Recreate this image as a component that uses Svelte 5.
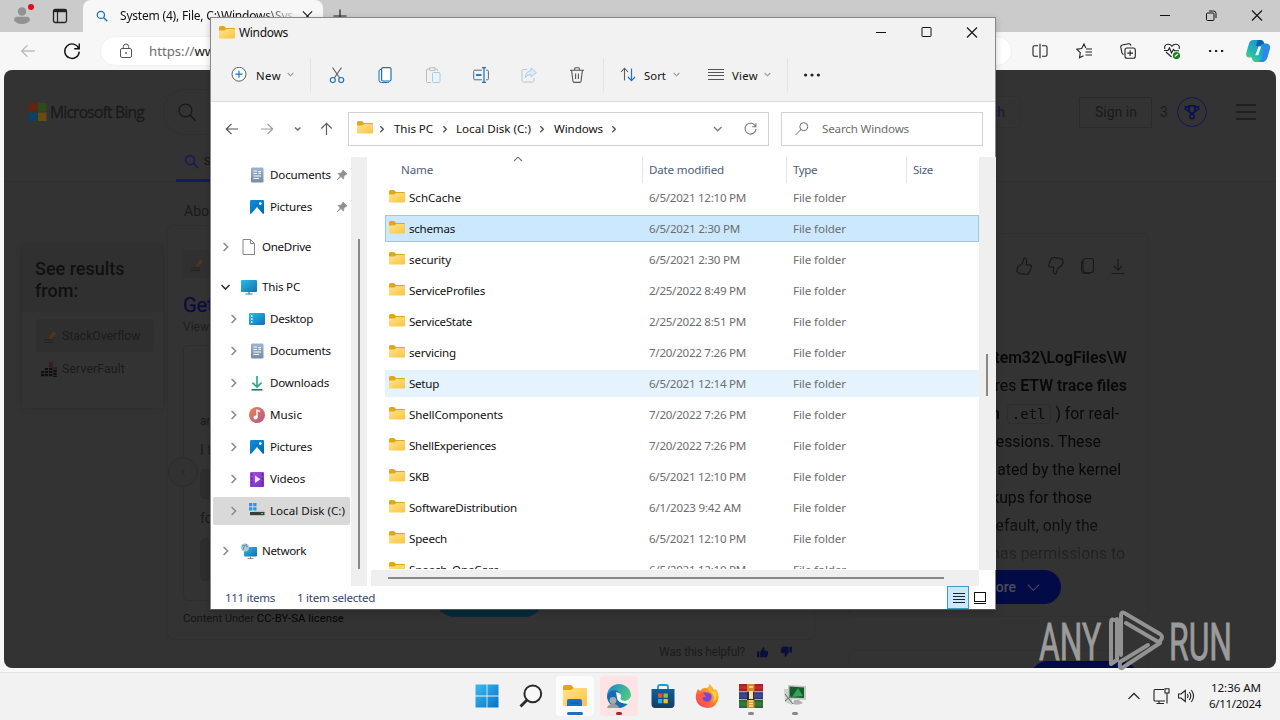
<script>
  // Tightens or opens the tracking of a label so that it fills its width.
  function fit(node, width) {
    if (!width) return;
    const natural = node.getBoundingClientRect().width;
    node.style.letterSpacing = (width - natural) / node.textContent.length + 'px';
  }

  const files = [
    ['SchCache', 52, '6/5/2021 12:10 PM', 97],
    ['schemas', 46, '6/5/2021 2:30 PM', 91, 'selected'],
    ['security', 42, '6/5/2021 2:30 PM', 91],
    ['ServiceProfiles', 76, '2/25/2022 8:49 PM', 97],
    ['ServiceState', 63, '2/25/2022 8:51 PM', 97],
    ['servicing', 47, '7/20/2022 7:26 PM', 97],
    ['Setup', 30, '6/5/2021 12:14 PM', 97, 'hover'],
    ['ShellComponents', 94, '7/20/2022 7:26 PM', 97],
    ['ShellExperiences', 87, '7/20/2022 7:26 PM', 97],
    ['SKB', 20, '6/5/2021 12:10 PM', 97],
    ['SoftwareDistribution', 108, '6/1/2023 9:42 AM', 92],
    ['Speech', 38, '6/5/2021 12:10 PM', 97],
    ['Speech_OneCore', 90, '6/5/2021 12:10 PM', 97]
  ];

  const nav = [
    { label: 'Documents', w: 61, icon: 'doc', kind: 'leaf', pin: true },
    { label: 'Pictures', w: 42, icon: 'pic', kind: 'leaf', pin: true },
    { label: 'OneDrive', w: 49, icon: 'file', kind: 'root', gap: true },
    { label: 'This PC', w: 38, icon: 'pc', kind: 'root', gap: true, open: true },
    { label: 'Desktop', w: 43, icon: 'desktop' },
    { label: 'Documents', w: 61, icon: 'doc' },
    { label: 'Downloads', w: 59, icon: 'down' },
    { label: 'Music', w: 32, icon: 'music' },
    { label: 'Pictures', w: 42, icon: 'pic' },
    { label: 'Videos', w: 35, icon: 'video' },
    { label: 'Local Disk (C:)', w: 75, icon: 'disk', on: true },
    { label: 'Network', w: 44, icon: 'net', kind: 'root', gap: true }
  ];

  const tools = ['cut', 'copy', 'paste', 'rename', 'share', 'trash'];
  const browserTools = ['split', 'star', 'collect', 'heart', 'dots'];
  const tasks = [
    ['start'], ['find'], ['explorer', 'active', 'blue'], ['edge', 'alert', 'red'],
    ['store'], ['firefox'], ['rar', '', 'gray'], ['monitor', '', 'gray']
  ];

  const icons = {
    folder: '<path d="M0 2.5Q0 1 1.5 1H5L7 3H15Q16 3 16 4V8H0Z" fill="#dfa818"/><path d="M0 5.6H5.4L7.4 4H15Q16 4 16 5V12.4Q16 13.4 15 13.4H1Q0 13.4 0 12.4Z" fill="url(#gf)"/>',
    doc: '<rect x="2" y="0.5" width="12.5" height="15" rx="1.2" fill="url(#gd)"/><path d="M4.5 4H8M4.5 6.5H8M4.5 9H12M4.5 11.5H10M9.5 4.5H12M9.5 6.3H12" stroke="#fff" stroke-width="1.2"/>',
    pic: '<rect x="1" y="1" width="14" height="14" rx="1.2" fill="url(#gp)"/><path d="M2 15L8 8L14 15Z" fill="#fff"/><circle cx="11.3" cy="4.6" r="1.4" fill="#fff"/>',
    file: '<path d="M2 .5H9.5L13.5 4.5V15.5H2ZM9.5 .5V4.5H13.5" fill="#fff" stroke="#858585"/>',
    pc: '<rect x="0" y="1" width="16" height="12" rx="1" fill="url(#gc)"/><path d="M8 13V15M4.5 15H11.5" stroke="#2f83a8" stroke-width="1.2"/>',
    desktop: '<rect x="0" y="2" width="16" height="12" rx="1.4" fill="url(#gc)"/><path d="M2 5H3.5M2 8H3.5M2 11H3.5" stroke="#fff" stroke-width="1.5"/>',
    down: '<path d="M8 1V12M3.4 7.6L8 12L12.6 7.6" stroke="#27b083" stroke-width="1.7" fill="none"/><path d="M2.5 14.8H13.5" stroke="#128764" stroke-width="1.6"/>',
    music: '<circle cx="8" cy="8" r="8" fill="url(#gm)"/><circle cx="6.5" cy="10.5" r="2" fill="#fff"/><path d="M8 10.5V3.2L11 4.5" stroke="#fff" stroke-width="1.4" fill="none"/>',
    video: '<rect x="1" y="1" width="14" height="15" rx="1" fill="url(#gv)"/><path d="M6 4.5L11.5 8.2L6 12Z" fill="#f2e6ff"/><path d="M2.8 2.5V15M13.4 2.5V15" stroke="#5c249c" stroke-width="1.5" stroke-dasharray="2 2"/>',
    disk: '<path d="M0 0H3.3V3.3H0ZM4.2 0H7.5V3.3H4.2ZM0 4.2H3.3V7.5H0ZM4.2 4.2H7.5V7.5H4.2Z" fill="#1aa0e0"/><path d="M3 8.5L15.5 7.5V9.5H1Z" fill="#c4c4c4"/><rect x="1" y="9" width="14.5" height="3.2" fill="#3c3c3c"/><path d="M12 10.6H14" stroke="#6bd36b"/>',
    net: '<rect x="3" y="4" width="13" height="9.5" rx="1" fill="url(#gc)"/><path d="M9.5 13.5V16M6.5 15.7H12.5" stroke="#888"/><circle cx="4" cy="4.5" r="4" fill="#a8cede"/><path d="M1 3Q4 1 7 4M2 7Q2 3 6 1" stroke="#5c8fa8" fill="none"/>',
    pin: '<path d="M7 1L11 5L9.5 5.6L7.8 7.5L7.5 10L5 7.6L1 11L4.3 7L2 4.5L4.5 4.2L6.4 2.5Z" fill="#909090" stroke="#909090" stroke-width=".8"/>',
    right: '<path d="M3.6 2L7.6 6L3.6 10" fill="none" stroke="#898989" stroke-width="1.5"/>',
    crumb: '<path d="M4.3 3.2L7.3 6.2L4.3 9.2" fill="none" stroke="#555" stroke-width="1.4"/>',
    openv: '<path d="M1.5 4L5.5 8L9.5 4" fill="none" stroke="#333" stroke-width="1.6"/>',
    chev: '<path d="M2.7 4L5.5 6.8L8.3 4" fill="none" stroke="#999" stroke-width="1.1"/>',
    up: '<path d="M2 8L6 4L10 8" fill="none" stroke="#777" stroke-width="1.1"/>',
    chevd: '<path d="M3 4L6.7 7.8L10.5 4" fill="none" stroke="#7a7a7a" stroke-width="1.3"/>',
    chevs: '<path d="M3 4.5L5.7 7L8.4 4.5" fill="none" stroke="#6a6a6a" stroke-width="1.5"/>',
    plus: '<circle cx="8" cy="7.2" r="7" fill="#fafdff" stroke="#5d6268"/><path d="M8 3.7V10.7M4.5 7.2H11.5" stroke="#1678c8" stroke-width="1.2"/>',
    cut: '<path d="M3.5 .5L10.7 11M12.5 .5L5.3 11" stroke="#5c5c5c" stroke-width="1.1"/><circle cx="3.8" cy="13" r="2.5" fill="none" stroke="#1b72bd" stroke-width="1.2"/><circle cx="12.2" cy="13" r="2.5" fill="none" stroke="#1b72bd" stroke-width="1.2"/>',
    copy: '<rect x="4.6" y=".6" width="9.4" height="13.4" rx="1.5" fill="#fff" stroke="#1971bb" stroke-width="1.2"/><path d="M4 2.3Q2 2.5 2 4V13.3Q2 15.5 4.3 15.5H10.5Q12 15.5 12.4 14.5" fill="none" stroke="#1971bb"/>',
    paste: '<path d="M6 15.5H2.5Q1.5 15.5 1.5 14.5V3Q1.5 2 2.5 2H4.5M10 2H11.5Q12.5 2 12.5 3V4M4.5 .7H10V3.3H4.5Z" fill="none" stroke="#bdbdbd"/><rect x="7.5" y="5.5" width="7.5" height="10" rx="1" fill="#e8f4fc" stroke="#a6cceb"/>',
    rename: '<path d="M9 3.2H1.8Q.7 3.2 .7 4.3V11.7Q.7 12.8 1.8 12.8H9M13 3.2H14.4Q15.4 3.2 15.4 4.3V11.7Q15.4 12.8 14.4 12.8H13" fill="none" stroke="#5e6770"/><path d="M11 .7V15.3M9 .6H13M9 15.4H13" stroke="#1971bb" stroke-width="1.2"/><path d="M3 8H8.5" stroke="#1683d8" stroke-width="2"/>',
    share: '<path d="M6 2.5H2.5Q1 2.5 1 4V13.5Q1 15 2.5 15H11.5Q13 15 13 13.5V11" fill="none" stroke="#c2c2c2"/><path d="M10 1L15.3 5.7L10 10V7.6Q6 7.2 4.4 10.7Q4.4 4.3 10 3.7Z" fill="#dceefa" stroke="#a9cce9"/>',
    trash: '<path d="M1 3.2H15M5.7 3V1.5Q5.7 .7 6.5 .7H9.5Q10.3 .7 10.3 1.5V3M2.6 3.5L4 14.2Q4.1 15.4 5.3 15.4H10.7Q11.9 15.4 12 14.2L13.4 3.5M6.6 6.5V12M9.4 6.5V12" fill="none" stroke="#555" stroke-width="1.1"/>',
    sort: '<path d="M4.5 13.5V1.5M1 5L4.5 1.2L8 5" fill="none" stroke="#5d5d5d" stroke-width="1.1"/><path d="M11.5 1.5V13.5M8 10L11.5 13.7L15 10" fill="none" stroke="#1977c9" stroke-width="1.2"/>',
    lines: '<path d="M0 2.5H16M0 5.5H16M0 8.5H16M0 12.5H16" stroke="#555"/>',
    more: '<path d="M0 8a1.6 1.6 0 1 0 3.2 0a1.6 1.6 0 1 0-3.2 0M6.4 8a1.6 1.6 0 1 0 3.2 0a1.6 1.6 0 1 0-3.2 0M12.8 8a1.6 1.6 0 1 0 3.2 0a1.6 1.6 0 1 0-3.2 0" fill="#252525"/>',
    back: '<path d="M14 8H2.5M7.5 2.8L2.3 8L7.5 13.2" fill="none" stroke="#505050" stroke-width="1.2"/>',
    fwd: '<path d="M2 8H13.5M8.5 2.8L13.7 8L8.5 13.2" fill="none" stroke="#9b9b9b" stroke-width="1.2"/>',
    upar: '<path d="M8.5 14V2.5M3.3 7.5L8.5 2.3L13.7 7.5" fill="none" stroke="#606060" stroke-width="1.2"/>',
    reload: '<path d="M13.4 6A5.8 5.8 0 1 0 13.8 8.5M13.8 2V6.2H9.8" fill="none" stroke="currentColor" stroke-width="1.1"/>',
    glass: '<circle cx="9.8" cy="5.7" r="4" fill="none" stroke="#6e6e6e"/><path d="M7 8.5L1.5 14" stroke="#6e6e6e"/>',
    min: '<path d="M3 7.5H13" stroke="#111"/>',
    max: '<rect x="3" y="2.5" width="9" height="9" rx=".6" fill="none" stroke="#111"/>',
    close: '<path d="M3 2.5L13 12.5M13 2.5L3 12.5" stroke="#111" stroke-width="1.1"/>',
    restore: '<rect x="3.5" y="5" width="7.5" height="7.5" rx="1" fill="none" stroke="#111"/><path d="M6 3H10.5Q13 3 13 5.5V10" fill="none" stroke="#111"/>',
    tabs: '<rect x="1.5" y="1.5" width="13" height="13" rx="1.8" fill="none" stroke="#222" stroke-width="1.3"/><path d="M1.5 3H14.5" stroke="#222" stroke-width="2.4"/><path d="M5.5 4V14" stroke="#222" stroke-width="1.2"/>',
    user: '<circle cx="8" cy="4.5" r="4.2" fill="#929292"/><path d="M0 13.5Q0 9.8 3 9.8H13Q16 9.8 16 13.5Q13 17 8 17Q3 17 0 13.5Z" fill="#929292"/>',
    search: '<circle cx="6.5" cy="6.5" r="4.8" fill="none" stroke="currentColor" stroke-width="1.7"/><path d="M10 10L15 15" stroke="currentColor" stroke-width="1.9"/>',
    search2: '<circle cx="6.6" cy="6.6" r="5.7" fill="none" stroke="currentColor" stroke-width="1.1"/><path d="M10.8 10.8L15.5 15.5" stroke="currentColor" stroke-width="1.2"/>',
    plus2: '<path d="M8 1.5V14.5M1.5 8H14.5" stroke="#222" stroke-width="1.2"/>',
    lock: '<rect x="2.5" y="5.5" width="11" height="9" rx="1.5" fill="none" stroke="#555"/><path d="M5.3 5.5V3.6Q5.3 1 8 1Q10.7 1 10.7 3.6V5.5" fill="none" stroke="#555"/><circle cx="8" cy="10" r=".9" fill="#555"/>',
    split: '<path d="M6 2.7H2.5Q1 2.7 1 4.2V11.8Q1 13.3 2.5 13.3H6M10 2.7H13.5Q15 2.7 15 4.2V11.8Q15 13.3 13.5 13.3H10M8 .8V15.2" fill="none" stroke="#222" stroke-width="1.1"/>',
    star: '<path d="M9.8 5.1L8 1L5.7 5.5L.8 6.2L4.3 9.7L3.5 14.8L7.5 12.8M10 6H16M9.5 9H16M9.5 12H16" fill="none" stroke="#222" stroke-width="1.1"/>',
    collect: '<rect x="5" y="5" width="10.3" height="10.3" rx="2" fill="none" stroke="#222" stroke-width="1.1"/><path d="M10.1 7.3V13M7.3 10.1H13M3.7 11.5Q2.2 11 1.9 9.6L.8 4.4Q.5 2.5 2.3 2L8.5 .8Q10.5 .5 11 2.7" fill="none" stroke="#222" stroke-width="1.1"/>',
    heart: '<path d="M.8 6Q0 1.5 4 1.2Q6.5 1 8 3.3Q9.5 1 12 1.2Q16 1.5 15.2 6M2 9L7.5 14M0 7.5H4L5.5 4.8L7.5 10L9.5 6.5L10.5 7.7H15" fill="none" stroke="#222" stroke-width="1.1"/><circle cx="12.5" cy="12.5" r="3.6" fill="#178417"/><path d="M10.8 13.5L14 11" stroke="#fff" stroke-width="1.1"/>',
    dots: '<path d="M1 8h2.2M7 8h2.2M13 8h2.2" stroke="#222" stroke-width="2.1"/>',
    copilot: '<path d="M7 0H14.5Q17.4 0 18.2 3.6H20Q24.6 3.6 23.8 8.5L21.4 17.2Q20 22 16 22H9.5Q6.4 22 5.6 17.6H3.6Q-.6 17.6 .2 13L3 3.6Q4.2 0 7 0Z" fill="url(#gcp)"/><path d="M11 22Q14.6 22 16 17.6L18.6 8.2Q19.6 4 22 4.4Q24.4 5.4 23.8 8.5L21.4 17.2Q20 22 16 22Z" fill="#2f86ef"/><path d="M12 0H14.5Q17.4 0 18.2 3.6Q15.6 3.6 14.6 6L10 6Q10.6 1.6 12 0Z" fill="#125fae"/><path d="M12.6 6.4H15.3L12.2 15.2H9.2Z" fill="#fff"/>',
    start: '<path d="M.5 .5H11.6V11.6H.5ZM12.4 .5H23.5V11.6H12.4ZM.5 12.4H11.6V23.5H.5ZM12.4 12.4H23.5V23.5H12.4Z" fill="url(#gs)"/>',
    find: '<circle cx="13.8" cy="9.8" r="8.4" fill="#f8f8f8" stroke="#2b2b2b" stroke-width="2"/><path d="M8 16L1.5 22.5" stroke="#2b2b2b" stroke-width="2.8"/>',
    explorer: '<path d="M0 3Q0 1 2 1H8L11 4H23V12H0Z" fill="#e5a50f"/><path d="M0 6H8L11 4H23Q24 4 24 5V21Q24 22 23 22H1Q0 22 0 21Z" fill="url(#gf)"/><path d="M4 22V17Q4 15 6 15H17Q19 15 19 17V22Z" fill="#1474ca"/><path d="M7 19H16" stroke="#0c5eac" stroke-width="1.2"/>',
    edge: '<circle cx="12" cy="12" r="12" fill="url(#ge)"/><path d="M0 13Q2 5 9 6.5Q14 8 14 12Q10 14 12 17Q14 20 21 19Q17 24 11 24Q2 22 0 13Z" fill="#176bb4"/><path d="M9 8Q15 9 14 13Q12 16 18 17Q23 16 23.8 12L24 15L21 20Q10 19 10 14Z" fill="#f4fbff"/><circle cx="6" cy="16.5" r="3.4" fill="#aaa"/><path d="M0 24Q1 20 6 20Q11 20 12 24Z" fill="#9c9c9c"/>',
    store: '<path d="M7 5V3Q7 1 9 1H15Q17 1 17 3V5" fill="none" stroke="#16a0df" stroke-width="1.8"/><path d="M.5 5H23.5V20Q23.5 24 20 24H4Q.5 24 .5 20Z" fill="url(#gst)"/><path d="M7 9.5H11.3V13.8H7Z" fill="#f25022"/><path d="M12.5 9.5H16.8V13.8H12.5Z" fill="#8bc53f"/><path d="M7 15H11.3V19.3H7Z" fill="#20b0f0"/><path d="M12.5 15H16.8V19.3H12.5Z" fill="#ffbd13"/>',
    firefox: '<path d="M3 5L5 7Q8 3 12 4Q14 3 14.5 0Q18 3 19 6L20.5 5Q24 9 23.5 14Q22 24 12 24Q2 23 .7 14Q.5 9 3 5Z" fill="url(#gff)"/><path d="M7 9Q12 7 16 10Q18 15 14 17.5Q8 18.5 6.5 13Q9 13.5 11 12.2Q7 11.5 7 9Z" fill="#7546da"/><path d="M2 11Q4 8 8 9L11 12Q7 12.5 7.5 15Q10 20 17 17Q12 22 6 19Q2 16 2 11Z" fill="#ff5b43"/><path d="M16 8Q21 12 18 18Q23 15 21 8Q17 8 14 4Q13 6 16 8Z" fill="#ffd43a"/>',
    rar: '<rect x="0" y="0" width="24" height="7.5" fill="#bf292f"/><rect x="0" y="8.2" width="24" height="7.2" fill="#34479f"/><rect x="0" y="16" width="24" height="8" fill="#33783a"/><path d="M0 1H24M0 9H24M0 17H24M0 6H24M0 14.5H24M0 23H24" stroke="#1d1b28" stroke-width=".8" opacity=".5"/><rect x="8" y="0" width="7.5" height="24" fill="#d68a28"/><path d="M8 8H15.5V16H8Z" fill="#392722"/><rect x="10" y="7" width="4" height="8" fill="#eee2c0"/><path d="M10 3H14M10 17H14M10 19.5H14M10 22H14" stroke="#ffe49a" stroke-width="1.3"/>',
    monitor: '<path d="M1 5H9V21L2 18Z" fill="#cdd1ce"/><path d="M5 1L23 2V16L5 15Z" fill="#c3c8c4"/><path d="M6.5 2.5L21 3.5V14L6.5 13.5Z" fill="#175c2d"/><path d="M9 13L15 4L20 12Z" fill="#35a159"/><path d="M11 16H16L20 19Q15 22 10 20Z" fill="#aeb3b0"/><path d="M2 10L10 20M2 17L8 12" stroke="#656a68"/>',
    tup: '<path d="M1.3 8.5L6 3.8L10.7 8.5" fill="none" stroke="#222" stroke-width="1.1"/>',
    net2: '<path d="M11 1.5H2Q1 1.5 1 2.5V12Q1 13 2 13H12M6 13V15.5M3.5 15.5H11M14 6V15.5M12 .7H16V5H12ZM14 5V7" fill="none" stroke="#222" stroke-width="1.1"/>',
    sound: '<path d="M.5 6H3L7.3 2.5V13.5L3 10H.5ZM9.3 6Q10.8 8 9.3 10M11.3 4Q14.3 8 11.3 12M13.3 2Q17.8 8 13.3 14" fill="none" stroke="#222" stroke-width="1.1"/>',
    thumb: '<path d="M2 10Q1 14 4 14.5L9 15.5Q12 16 13 13L14.5 9Q15 7 13 7H10Q11 1 8.5 1Q7.5 1 7.5 3Q7 6 4.5 7.5Q2.5 8 2 10Z" fill="none" stroke="currentColor" stroke-width="1.1"/>',
    thumbf: '<path d="M0 7H3V14H0ZM4 7.5L8 1Q10 2 9 6H13Q15 8 12.5 14H4Z" fill="currentColor"/>',
    cup: '<path d="M5 1.8H11V5.8Q11 9.3 8 9.3Q5 9.3 5 5.8ZM5 2.8H1.5V5.3L5 7.3M11 2.8H14.5V5.3L11 7.3" fill="none" stroke="currentColor" stroke-width="1.8"/><circle cx="8" cy="12.5" r="2.2" fill="none" stroke="currentColor" stroke-width="1.6"/>',
    sheet: '<rect x="4" y="1" width="10.5" height="14" rx="2.5" fill="none" stroke="currentColor" stroke-width="1.2"/><path d="M4 3.5Q2.5 3.5 2.5 5V12.5Q2.5 16 6 16H11" fill="none" stroke="currentColor" stroke-width="1.1"/>',
    dl: '<path d="M8 1V12M3.8 8L8 12.2L12.2 8M1.5 15.5H14.5" fill="none" stroke="currentColor" stroke-width="1.2"/>',
    bigchev: '<path d="M1 4.5L8 11.5L15 4.5" fill="none" stroke="currentColor" stroke-width="1.3"/>',
    burger: '<path d="M0 1H20M0 8H20M0 15H20" stroke="#1a1a1a" stroke-width="1.4"/>',
    so: '<path d="M7 10L11 3L14 6L9 11Z" fill="#55331d"/><path d="M2 12H11M2 14.5H11" stroke="#222" stroke-width="1.2"/>',
    sf: '<path d="M1.5 10V16M5.5 7V16M9.7 1V16M14 6V16" stroke="#101010" stroke-width="3.4" stroke-dasharray="2.3 .7"/><path d="M9.7 1V7M14 6V9" stroke="#421920" stroke-width="3.4" stroke-dasharray="2.3 .7"/>',
    logo: '<path d="M0 0H8.5V8.5H0Z" fill="#66220f"/><path d="M9.5 0H18V8.5H9.5Z" fill="#30491b"/><path d="M0 9.5H8.5V18H0Z" fill="#0c4160"/><path d="M9.5 9.5H18V18H9.5Z" fill="#684b10"/>',
    preview: '<rect x="1.5" y="1.5" width="11" height="9" fill="#fff" stroke="#111"/><path d="M1 12.5H13" stroke="#111"/>',
    details: '<path d="M2 2.5H14M2 5.5H14M2 8.5H14M2 11.5H14" stroke="#222"/>'
  };

  const answer = [
    { html: '<b>tem32\\LogFiles\\W</b>', right: 0 },
    { html: 'res <b>ETW trace files</b>', right: 0 },
    { html: '<b>n</b> <code>.etl</code> ) for real-', right: 8 },
    { html: 'essions. These', right: 26 },
    { html: 'ated by the kernel', right: 6 },
    { html: 'kups for those', right: 35 },
    { html: 'efault, only the', right: 29 },
    { html: 'has permissions to', right: 2 }
  ];
</script>

{#snippet ic(name, w = 16, h = w, vb = `0 0 ${w} ${h}`)}
  <svg class="ic" width={w} height={h} viewBox={vb}>{@html icons[name]}</svg>
{/snippet}
{#snippet t(text, w)}<span class="t" use:fit={w}>{text}</span>{/snippet}

<svg class="defs" width="0" height="0">
  <defs>
    <linearGradient id="gf" x1="0" y1="0" x2="1" y2="1"><stop offset="0" stop-color="#ffe391" /><stop offset="1" stop-color="#fcc53d" /></linearGradient>
    <linearGradient id="gd" x1="0" y1="0" x2="0" y2="1"><stop offset="0" stop-color="#9db3d0" /><stop offset="1" stop-color="#748cab" /></linearGradient>
    <linearGradient id="gp" x1="0" y1="0" x2="1" y2="1"><stop offset="0" stop-color="#0b8fdc" /><stop offset="1" stop-color="#0564b2" /></linearGradient>
    <linearGradient id="gc" x1="0" y1="0" x2="1" y2="1"><stop offset="0" stop-color="#29c0de" /><stop offset="1" stop-color="#126db8" /></linearGradient>
    <linearGradient id="gm" x1="0" y1="0" x2="1" y2="1"><stop offset="0" stop-color="#f08457" /><stop offset="1" stop-color="#b15589" /></linearGradient>
    <linearGradient id="gv" x1="0" y1="0" x2="1" y2="1"><stop offset="0" stop-color="#a652e4" /><stop offset="1" stop-color="#7531bf" /></linearGradient>
    <linearGradient id="gs" x1="0" y1="0" x2="1" y2="1"><stop offset="0" stop-color="#3cbcf0" /><stop offset="1" stop-color="#0571c9" /></linearGradient>
    <linearGradient id="ge" x1="0" y1="0" x2="1" y2=".6"><stop offset="0" stop-color="#1588d4" /><stop offset="1" stop-color="#59cf79" /></linearGradient>
    <linearGradient id="gst" x1="0" y1="0" x2="0" y2="1"><stop offset="0" stop-color="#0f5e9e" /><stop offset="1" stop-color="#173a66" /></linearGradient>
    <linearGradient id="gff" x1="1" y1="0" x2="0" y2="1"><stop offset="0" stop-color="#ffdf36" /><stop offset=".5" stop-color="#ff8230" /><stop offset="1" stop-color="#f12a72" /></linearGradient>
    <linearGradient id="gcp" x1="0" y1=".9" x2=".7" y2=".1"><stop offset="0" stop-color="#5fd07a" /><stop offset=".45" stop-color="#1fb5b5" /><stop offset="1" stop-color="#1a8fe0" /></linearGradient>
  </defs>
</svg>

<div class="screen">
  <div class="tabbar">
    <div class="profile">{@render ic('user', 16, 18)}<i></i></div>
    <div class="tabact">{@render ic('tabs')}</div>
    <div class="tab">
      <span class="bingico">{@render ic('search', 12, 12, '0 0 16 16')}</span>
      <span class="title">{@render t('System (4), File, C:\\Windows\\Sys', 173)}</span>
      {@render ic('close', 13, 13, '1 1 14 14')}
    </div>
    <div class="newtab">{@render ic('plus2')}</div>
    <div class="wc">
      {@render ic('min')}{@render ic('restore')}{@render ic('close')}
    </div>
  </div>

  <div class="browserbar">
    <span class="bback">{@render ic('back', 18, 18, '0 0 16 16')}</span>
    <span class="breload">{@render ic('reload', 20, 20, '0 0 16 16')}</span>
    <div class="url">{@render ic('lock')}<span class="addr"><em>https://</em>www.bing</span></div>
    <div class="btools">{#each browserTools as b}{@render ic(b)}{/each}</div>
    {@render ic('copilot', 24, 22)}
  </div>

  <div class="page">
    <header>
      <div class="brand">
        {@render ic('logo', 19, 18, '0 0 18 18')}
        <span class="bing">{@render t('Microsoft Bing', 94)}</span>
        <div class="pill">{@render ic('search2', 18, 18, '0 0 16 16')}</div>
        <div class="deep">ch</div>
        <div class="signin">{@render t('Sign in', 42)}</div>
        <span class="pts">3</span>
        <span class="badge">{@render ic('cup')}</span>
        {@render ic('burger', 20, 16)}
      </div>
      <div class="scope"><div>{@render ic('search', 15, 15, '0 0 16 16')}<span>S</span></div></div>
    </header>
    <div class="cols">
      <aside>
        <h3>See results from:</h3>
        <div class="srcs">
          <div class="src on">{@render ic('so')}{@render t('StackOverflow', 78)}</div>
          <div class="src">{@render ic('sf', 17, 16)}{@render t('ServerFault', 63)}</div>
        </div>
      </aside>
      <section class="mainc">
        <div class="about">Abou</div>
        <div class="card">
          <div class="fav">{@render ic('so')}</div>
          <h2>Get</h2>
          <div class="viewed">View</div>
          <div class="inner">
            <p class="dim">an</p>
            <p>I f</p>
            <div class="codebox"></div>
            <p>fo</p>
            <div class="codebox tall"></div>
            <div class="teal"></div>
          </div>
          <div class="lic">{@render t('Content Under', 71)} <b>{@render t('CC-BY-SA license', 87)}</b></div>
          <span class="arrow">‹</span>
        </div>
        <div class="helpful">{@render t('Was this helpful?', 86)}{@render ic('thumbf', 12, 12, '0 0 15 15')}<span class="flip">{@render ic('thumbf', 12, 12, '0 0 15 15')}</span></div>
      </section>
      <section class="rightc">
        <div class="acard">
          <div class="acts">{@render ic('thumb', 18, 18, '0 0 16 16')}<span class="flip">{@render ic('thumb', 18, 18, '0 0 16 16')}</span>{@render ic('sheet', 17, 18, '0 0 17 17')}{@render ic('dl', 17, 17, '0 0 17 17')}</div>
          <div class="lines">
            {#each answer as a}<div class="line" style:padding-right="{a.right}px">{@html a.html}</div>{/each}
          </div>
          <div class="readmore">more {@render ic('bigchev', 13, 13, '0 0 16 16')}</div>
        </div>
        <div class="next"><div></div></div>
      </section>
    </div>
  </div>

  <div class="taskbar">
    <div class="tasks">
      {#each tasks as [name, state, mark]}
        <div class="task {state || ''}">{@render ic(name, 24)}<i class={mark || 'none'}></i></div>
      {/each}
    </div>
    <div class="tray">
      {@render ic('tup', 14, 14, '0 0 12 12')}{@render ic('net2', 17, 17, '0 0 17 17')}{@render ic('sound', 17, 17, '0 0 17 17')}
      <div class="clock">{@render t('12:36 AM', 50)}{@render t('6/11/2024', 52)}</div>
    </div>
  </div>

  <svg class="mark" width="200" height="70" viewBox="0 0 200 70">
    <g fill="#9b9b9b" stroke="#9b9b9b" stroke-width=".9" font-family="Roboto, sans-serif" font-size="52">
      <text x="1" y="50.5" textLength="62" lengthAdjust="spacingAndGlyphs">ANY</text>
      <text x="131" y="50.5" textLength="63" lengthAdjust="spacingAndGlyphs">RUN</text>
    </g>
    <g fill="none" stroke="#929292" stroke-width="4" stroke-linejoin="round" stroke-linecap="round">
      <path d="M76 11Q73 9 73 14V55L79 51V10M83 46V7Q83 1 88 5L122 25Q126 28 122 32M88 14L122 34L84 59Q81 60 82 53L110 36" />
    </g>
  </svg>

  <div class="window">
    <div class="top">
      <div class="titlebar">{@render ic('folder')}{@render t('Windows', 49)}
        <div class="wctl">{@render ic('min')}{@render ic('max')}{@render ic('close')}</div>
      </div>
      <div class="commands">
        <div class="cmd new">{@render ic('plus')}{@render t('New', 25)}{@render ic('chev', 12)}</div>
        <div class="group">{#each tools as n}<div class="tool">{@render ic(n)}</div>{/each}</div>
        <div class="cmd sort">{@render ic('sort')}{@render t('Sort', 22)}{@render ic('chev', 12)}</div>
        <div class="cmd view">{@render ic('lines')}{@render t('View', 26)}{@render ic('chev', 12)}</div>
        <div class="cmd last">{@render ic('more')}</div>
      </div>
    </div>
    <div class="addressrow">
      <div class="navbtns">{@render ic('back')}{@render ic('fwd')}{@render ic('chevs', 12)}{@render ic('upar')}</div>
      <div class="path">
        {@render ic('folder')}{@render ic('crumb', 12)}
        <span class="c1">{@render t('This PC', 39)}</span>{@render ic('crumb', 12)}
        <span class="c2">{@render t('Local Disk (C:)', 75)}</span>{@render ic('crumb', 12)}
        <span class="c3">{@render t('Windows', 49)}</span>{@render ic('crumb', 12)}
        <span class="drop">{@render ic('chevd', 12)}</span>
        <span class="refresh">{@render ic('reload', 15, 15, '0 0 16 16')}</span>
      </div>
      <div class="searchbox">{@render ic('glass')}{@render t('Search Windows', 87)}</div>
    </div>
    <div class="body">
      <nav>
        {#each nav as n}
          <div class="nrow {n.kind || 'child'}" class:gap={n.gap} class:on={n.on}>
            <span class="exp">{#if n.kind !== 'leaf'}{@render ic(n.open ? 'openv' : 'right', 12)}{/if}</span>
            {@render ic(n.icon)}
            {@render t(n.label, n.w)}
            {#if n.pin}<span class="pin">{@render ic('pin', 12)}</span>{/if}
          </div>
        {/each}
      </nav>
      <div class="navscroll"><i></i></div>
      <div class="files">
        <div class="view-area">
          <div class="listing">
            <div class="heads">
              <div class="h name">{@render t('Name', 32)}<span class="sorted">{@render ic('up', 12)}</span></div>
              <div class="h date">{@render t('Date modified', 75)}</div>
              <div class="h type">{@render t('Type', 24)}</div>
              <div class="h size">{@render t('Size', 20)}</div>
            </div>
            {#each files as [name, w, date, dw, state]}
              <div class="frow {state || ''}">
                <div class="fname">{@render ic('folder')}{@render t(name, w)}</div>
                <div class="fdate">{@render t(date, dw)}</div>
                <div class="ftype">{@render t('File folder', 53)}</div>
              </div>
            {/each}
          </div>
          <div class="vscroll"><i></i></div>
        </div>
        <div class="hscroll"><i></i></div>
      </div>
    </div>
    <div class="status">
      {@render t('111 items', 50)}<span class="sel">{@render t('1 item selected', 78)}</span>
      <div class="modes"><span class="m on">{@render ic('details', 14)}</span><span class="m">{@render ic('preview', 14)}</span></div>
    </div>
  </div>
</div>

<style>
  :global(body) { margin: 0; overflow: hidden; }
  * { box-sizing: border-box; }
  .defs { position: absolute; }
  .ic { display: block; flex: none; }
  .t { white-space: nowrap; flex: none; }
  .screen { position: relative; width: 1280px; height: 720px; overflow: hidden; display: flex; flex-direction: column; background: #f7f7f7; font: 11.6px/16px "Noto Sans", sans-serif; color: #111; }

  .tabbar { height: 32px; background: #cbcbcb; display: flex; align-items: center; flex: none; }
  .profile { width: 44px; padding-left: 14px; position: relative; }
  .profile i { position: absolute; left: 28px; top: -3px; width: 6px; height: 6px; border-radius: 50%; background: #e00b1c; }
  .tabact { width: 39px; padding-left: 8px; }
  .tab { width: 240px; height: 32px; background: #f7f7f7; border-radius: 8px 8px 0 0; display: flex; align-items: center; padding-left: 13px; }
  .bingico { color: #1a6fc0; width: 24px; }
  .title { width: 181px; mask-image: linear-gradient(90deg, #000 140px, transparent 180px); font-size: 12px; }
  .newtab { padding-left: 9px; }
  .wc { margin-left: auto; display: flex; gap: 30px; padding-right: 15px; }

  .browserbar { height: 38px; flex: none; display: flex; align-items: center; padding: 0 10px 0 19px; background: #f7f7f7; }
  .bback { width: 43px; opacity: .35; }
  .breload { width: 38px; }
  .url { width: 912px; height: 30px; border-radius: 15px; background: #fff; border: 1px solid #f0f0f0; display: flex; align-items: center; padding-left: 17px; gap: 15px; font-size: 13.2px; }
  .addr em { font-style: normal; color: #6d6d6d; }
  .btools { display: flex; gap: 28px; padding-left: 20px; margin-right: auto; }

  .page { width: 1272px; height: 598px; margin: 0 4px; background: #333; border-radius: 8px; overflow: hidden; flex: none; font-family: Roboto, sans-serif; color: #1a1a1a; }
  header { height: 112px; border-bottom: 1px solid #2f2f2f; }
  .brand { display: flex; align-items: center; height: 84px; padding-left: 24px; }
  .bing { font: 15.5px "Open Sans", sans-serif; color: #1a1a1a; margin: -1px 0 0 3px; width: 113px; -webkit-text-stroke: .3px #1a1a1a; }
  .pill { width: 200px; height: 46px; border: 1px solid #303030; border-radius: 23px; padding: 13px 14px; color: #171717; }
  .deep { width: 110px; margin-left: 548px; height: 32px; border: 1px solid #303030; border-radius: 4px; line-height: 30px; text-align: right; padding-right: 15px; font-size: 14px; color: #17173c; }
  .signin { margin-left: 58px; width: 73px; height: 31px; border: 1px solid #2a2a2a; line-height: 29px; padding-left: 15px; font-size: 14px; }
  .pts { width: 25px; padding-left: 8px; font-size: 14px; }
  .badge { width: 30px; height: 30px; border: 1.6px solid #0e1458; border-radius: 50%; color: #0d1250; padding: 5.8px; margin-right: 29px; }
  .scope { padding-left: 172px; }
  .scope div { width: 100px; height: 28px; border-bottom: 3px solid #171a58; display: flex; align-items: center; gap: 5px; color: #171a58; padding: 0 8px 10px; }
  .scope span { font-size: 11px; color: #111; }
  .cols { display: flex; height: 486px; }
  aside { width: 141px; height: 163px; margin: 63px 0 0 18px; background: #303030; border-radius: 6px; box-shadow: 0 0 5px #2b2b2b; }
  h3 { font: 500 18px/22px Roboto, sans-serif; color: #101010; margin: 0; padding: 13px; width: 125px; height: 67px; }
  .srcs { background: #333; padding: 7px 9px 0 14px; height: 96px; }
  .src { height: 33px; display: flex; align-items: center; gap: 4px; font-size: 12.3px; color: #1b1b1b; padding-left: 6px; }
  .src:last-child { padding-left: 5px; }
  .src.on { background: #2f2f2f; border-radius: 4px; }
  .mainc { width: 648px; margin-left: 4px; }
  .about { height: 43px; padding: 21px 17px 0; font-size: 14px; }
  .card { position: relative; height: 415px; border: 1px solid #303030; border-radius: 6px; padding: 24px 15px; background: #333; }
  .fav { width: 28px; height: 28px; padding: 6px; background: #303030; border-radius: 4px; }
  h2 { font: 400 20px/26px Roboto, sans-serif; color: #0b0b40; margin: 14px 0 0; -webkit-text-stroke: .3px #0b0b40; }
  .viewed { font-size: 12px; line-height: 18px; color: #1e1e1e; margin-bottom: 9px; }
  .inner { height: 256px; border: 1px solid #2e2e2e; padding: 66px 16px 0; border-radius: 6px; }
  .inner p { margin: 0; font-size: 14px; line-height: 30px; }
  .inner p.dim { font-size: 12px; line-height: 18px; margin-bottom: 5px; }
  .codebox { height: 30px; background: #2d2d2d; border-radius: 5px; margin: 4px 0; }
  .codebox.tall { height: 43px; margin: 5px 0 0; }
  .teal { width: 109px; height: 40px; border-radius: 20px; background: #052a3c; margin: -4px 0 0 235px; position: relative; }
  .lic { font-size: 11.3px; line-height: 16px; margin-top: 10px; color: #141414; }
  .lic b { font-weight: 400; color: #050505; }
  .arrow { position: absolute; left: 0; top: 231px; width: 30px; height: 30px; border: 1px solid #2c2c2c; border-radius: 50%; text-align: center; line-height: 26px; font-size: 18px; background: #323232; color: #292929; }
  .helpful { display: flex; gap: 11px; align-items: center; padding: 4px 0 0 492px; font-size: 12px; color: #1b1b1b; }
  .helpful .ic { color: #0b0e38; margin-left: 1px; }
  .flip { transform: rotate(180deg); }
  .rightc { width: 300px; margin-left: 34px; }
  .acard { height: 384px; margin-top: 51px; border: 1px solid #303030; border-radius: 6px; padding: 23px 21px 0 0; }
  .acts { display: flex; gap: 14px; justify-content: flex-end; color: #1a1a1a; align-items: center; height: 18px; }
  .lines { padding-top: 69px; mask-image: linear-gradient(#000 240px, transparent 305px); }
  .line { height: 28px; line-height: 28px; font-size: 15.8px; color: #080808; text-align: right; white-space: nowrap; }
  .line :global(b) { font-weight: 600; }
  .line :global(code) { font: 14px "DejaVu Sans Mono", monospace; border: 1px solid #2d2d2d; border-radius: 4px; padding: 1px 4px; margin: 0 1px 0 3px; }
  .readmore { width: 140px; height: 34px; border-radius: 17px; margin: 2px 0 0 71px; background: #030b46; color: #4c4c58; font: 500 14px/34px Roboto, sans-serif; display: flex; align-items: center; justify-content: flex-end; gap: 11px; padding-right: 21px; }
  .next { height: 36px; margin-top: 33px; border: 1px solid #303030; border-radius: 6px; padding: 10px 0 0 180px; }
  .next div { height: 36px; width: 108px; border-radius: 18px; background: #030b46; }

  .taskbar { height: 52px; flex: none; background: #f2f2f2; border-top: 4px solid #f8f8f8; box-shadow: inset 0 1px #e3e3e3; display: flex; align-items: center; }
  .tasks { display: flex; gap: 4px; padding-left: 466.5px; }
  .task { width: 40px; height: 40px; border-radius: 4px; display: flex; flex-direction: column; align-items: center; padding-top: 8px; }
  .task i { height: 3px; width: 6px; border-radius: 2px; background: #878787; margin-top: 4px; }
  .task i.none { background: none; }
  .task i.blue { width: 16px; background: #1b6ec2; }
  .task i.red { background: #b3202a; }
  .task.active { background: #fcfcfc; width: 38px; margin: 0 1px; }
  .task.alert { background: #fde3e4; width: 38px; margin: 0 1px; }
  .tray { margin-left: auto; display: flex; align-items: center; padding-right: 19px; }
  .tray > .ic { margin-right: 12px; }
  .tray > .ic:nth-of-type(2) { margin-right: 8px; }
  .tray > .ic:nth-of-type(3) { margin-right: 14px; }
  .clock { display: flex; flex-direction: column; align-items: flex-end; }
  .mark { position: absolute; left: 1038px; top: 609px; }

  .window { position: absolute; left: 210px; top: 17px; width: 786px; height: 593px; background: #fff; border: 1px solid #888; border-bottom-color: #555; box-shadow: 0 2px 7px #0003; display: flex; flex-direction: column; }
  .top { height: 84px; background: #f2f2f2; border-bottom: 1px solid #dcdcdc; flex: none; }
  .titlebar { height: 29px; display: flex; align-items: center; padding-left: 8px; gap: 4px; font-size: 12px; }
  .wctl { margin-left: auto; display: flex; gap: 29.5px; padding-right: 15px; }
  .commands { height: 54px; padding-top: 2px; display: flex; align-items: center; }
  .cmd { display: flex; align-items: center; height: 34px; font-size: 11.3px; }
  .cmd .t { padding-top: 1px; }
  .new { padding-left: 20px; width: 100px; gap: 9px; border-right: 1px solid #e3e3e3; }
  .new .ic:last-child { margin-left: -5px; }
  .group { display: flex; padding-left: 2px; width: 293px; height: 34px; border-right: 1px solid #e3e3e3; }
  .tool { width: 48px; display: grid; place-items: center; }
  .sort { padding-left: 16px; gap: 8px; width: 88px; }
  .sort .ic:last-child { margin-left: -3px; }
  .view { padding-left: 16px; gap: 8px; width: 96px; border-right: 1px solid #e3e3e3; }
  .view .ic:last-child { margin-left: -4px; }
  .last { padding-left: 16px; }
  .addressrow { height: 55px; display: flex; align-items: center; flex: none; padding-bottom: 2px; }
  .navbtns { display: flex; align-items: center; width: 137px; padding-left: 13px; gap: 19px; }
  .navbtns .ic:nth-child(3) { margin-right: -5px; margin-left: -2px; }
  .path { width: 421px; height: 34px; border: 1px solid #d3d3d3; display: flex; align-items: center; padding-left: 8px; }
  .path > .ic:nth-child(1) { margin-top: -1px; }
  .path > .ic:nth-child(2) { margin-left: 3px; }
  .path .c1 { width: 51px; padding-left: 6px; }
  .c2 { width: 85px; padding-left: 5px; }
  .c3 { width: 60px; padding-left: 6px; }
  .drop { margin-left: auto; }
  .refresh { margin: 0 10px 0 20px; color: #777; }
  .searchbox { margin-left: 12px; width: 202px; height: 34px; border: 1px solid #d3d3d3; display: flex; align-items: center; padding-left: 12px; gap: 12px; color: #6c6c6c; }
  .body { height: 429px; display: flex; flex: none; }
  nav { width: 140px; padding: 2px 0 0 2px; flex: none; }
  .nrow { height: 28px; margin: 2px 0 4px; display: flex; align-items: center; padding-left: 15px; gap: 5px; width: 137px; }
  .nrow.root { padding-left: 7px; }
  .nrow.gap { margin-top: 12px; }
  .nrow.on { background: #d9d9d9; border-radius: 2px; }
  .exp { width: 16px; height: 12px; }
  .pin { margin-left: auto; margin-right: 2px; }
  .navscroll { width: 16px; flex: none; background: #efefef; padding: 82px 0 0 7px; }
  .navscroll i { display: block; width: 2px; height: 330px; background: #888; }
  .files { flex: 1; padding-left: 4px; display: flex; flex-direction: column; }
  .view-area { height: 413px; display: flex; overflow: hidden; }
  .listing { width: 608px; flex: none; height: 412px; overflow: hidden; padding-left: 14px; }
  .heads { height: 27px; display: flex; color: #4e6078; }
  .h { height: 26px; line-height: 26px; padding-left: 6px; border-left: 1px solid #e5e5e5; display: flex; }
  .name { width: 257px; padding-left: 16px; border: 0; position: relative; }
  .sorted { position: absolute; left: 127px; top: -4px; }
  .date { width: 144px; }
  .type { width: 120px; }
  .frow { height: 27px; margin-bottom: 4px; display: flex; align-items: center; width: 594px; color: #6d6d6d; }
  .frow.selected { background: #cce8ff; box-shadow: inset 0 0 0 1px #99c9ea; }
  .frow.hover { background: #e5f3ff; }
  .fname { width: 264px; display: flex; align-items: center; gap: 4px; padding-left: 4px; color: #111; }
  .fname .ic { margin-top: -1px; }
  .fdate { width: 144px; }
  .vscroll { width: 17px; flex: none; background: #efefef; padding: 197px 0 0 7px; }
  .vscroll i { display: block; width: 2px; height: 42px; background: #888; }
  .hscroll { height: 16px; width: 608px; background: #efefef; padding: 7px 0 0 17px; }
  .hscroll i { display: block; width: 556px; height: 2px; background: #888; }
  .status { flex: 1; display: flex; align-items: center; padding-left: 14px; color: #33486f; }
  .sel { margin-left: 22px; }
  .modes { margin-left: auto; display: flex; padding-right: 4px; }
  .m { width: 22px; height: 23px; display: grid; place-items: center; }
  .m.on { background: #cce8ff; border: 1px solid #3d9bc8; }
</style>
